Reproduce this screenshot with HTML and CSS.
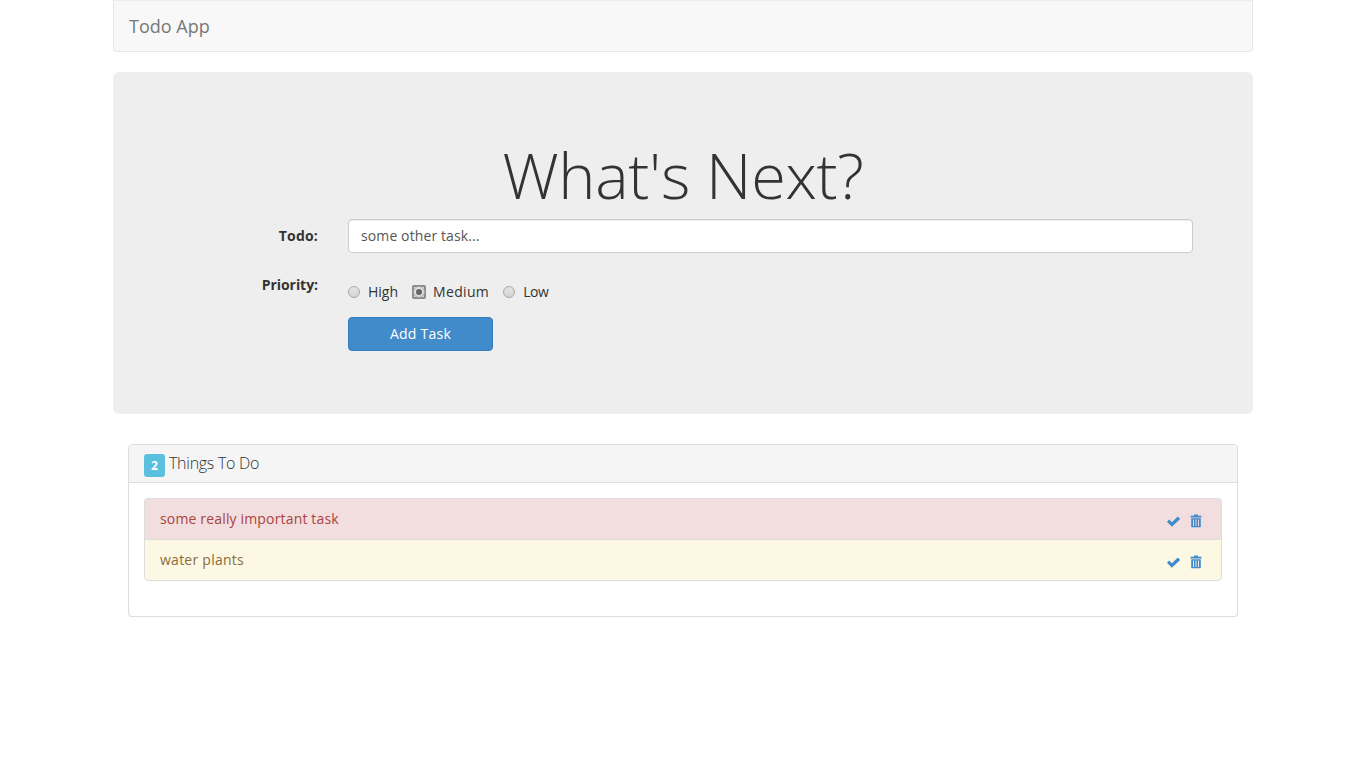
FILE: index.html
```html
<!DOCTYPE html>
<html lang="en">
<head>
<meta charset="utf-8">
<title>Todo App</title>
<link rel="stylesheet" href="styles.css">
</head>
<body>
<div class="container">
  <nav class="navbar"><a class="brand" href="#">Todo App</a></nav>
  <section class="jumbotron">
    <h1>What's Next?</h1>
    <form class="task-form">
      <div class="form-group">
        <label class="field-label todo-label" for="todo">Todo:</label>
        <div class="field"><input id="todo" class="text-input" type="text" value="some other task..."></div>
      </div>
      <div class="form-group">
        <span class="field-label">Priority:</span>
        <div class="field radios">
          <label class="radio"><input type="radio" name="priority"><span>High</span></label>
          <label class="radio"><input class="focused" type="radio" name="priority" checked><span class="medium">Medium</span></label>
          <label class="radio"><input type="radio" name="priority"><span class="low">Low</span></label>
        </div>
      </div>
      <div class="form-group">
        <span class="field-label"></span>
        <div class="field"><button class="btn" type="button">Add Task</button></div>
      </div>
    </form>
  </section>
  <section class="panel">
    <header class="panel-heading"><span class="count">2</span><span class="panel-title">Things To Do</span></header>
    <div class="panel-body">
      <ul class="list">
        <li class="item danger"><span>some really important task</span>
          <span class="actions">
            <svg class="icon" viewBox="0 0 14 14"><path d="M0 7.8 2.2 5.6 4.9 8.2 10.8 2.6 13.2 4.9 4.9 12.8Z"/></svg>
            <svg class="icon trash" viewBox="0 0 12 14"><path fill-rule="evenodd" d="M4.2 0.6H7.8L8.4 1.8H11.5V3.6H0.5V1.8H3.6ZM1.2 4.3H10.8V12.4Q10.8 13.3 9.9 13.3H2.1Q1.2 13.3 1.2 12.4ZM3.1 5.6V12H4V5.6ZM5.55 5.6V12H6.45V5.6ZM8 5.6V12H8.9V5.6Z"/></svg>
          </span>
        </li>
        <li class="item warning"><span>water plants</span>
          <span class="actions">
            <svg class="icon" viewBox="0 0 14 14"><path d="M0 7.8 2.2 5.6 4.9 8.2 10.8 2.6 13.2 4.9 4.9 12.8Z"/></svg>
            <svg class="icon trash" viewBox="0 0 12 14"><path fill-rule="evenodd" d="M4.2 0.6H7.8L8.4 1.8H11.5V3.6H0.5V1.8H3.6ZM1.2 4.3H10.8V12.4Q10.8 13.3 9.9 13.3H2.1Q1.2 13.3 1.2 12.4ZM3.1 5.6V12H4V5.6ZM5.55 5.6V12H6.45V5.6ZM8 5.6V12H8.9V5.6Z"/></svg>
          </span>
        </li>
      </ul>
    </div>
  </section>
</div>
</body>
</html>
```
FILE: styles.css
```css
*, *::before, *::after { box-sizing: border-box; }
html, body { margin: 0; padding: 0; }
body {
  font-family: "Open Sans", sans-serif;
  font-size: 14px;
  line-height: 20px;
  color: #333;
  background: #fff;
}
.container { width: 1140px; margin: 0 auto; }
.navbar {
  height: 52px;
  margin-bottom: 20px;
  padding: 0 15px;
  display: flex;
  align-items: center;
  background: #f8f8f8;
  border: 1px solid #e7e7e7;
  border-top-color: #eee;
  border-radius: 0 0 4px 4px;
}
.brand { font-size: 18px; color: #777; text-decoration: none; }
.jumbotron {
  padding: 48px 60px;
  margin-bottom: 30px;
  background: #eee;
  border-radius: 6px;
}
h1 {
  margin: 20px 0 10px;
  font-size: 63px;
  font-weight: 300;
  line-height: 1.1;
  letter-spacing: -0.29px;
  text-align: center;
  color: #333;
}
.form-group { display: flex; margin-bottom: 15px; }
.field-label {
  flex: 0 0 145px;
  margin-right: 30px;
  padding-top: 7px;
  font-weight: 700;
  letter-spacing: -0.05px;
  text-align: right;
}
.todo-label { letter-spacing: 0.2px; }
.field { flex: 1; }
.text-input {
  display: block;
  width: 100%;
  height: 34px;
  padding: 5px 12px 7px;
  font: inherit;
  letter-spacing: 0.11px;
  color: #555;
  background: #fff;
  border: 1px solid #ccc;
  border-radius: 4px;
  box-shadow: inset 0 1px 1px rgba(0,0,0,.075);
}
.radios { display: flex; gap: 14px; padding-top: 14px; }
.radio { display: flex; align-items: center; height: 20px; isolation: isolate; }
.radio input {
  appearance: none;
  width: 12px;
  height: 12px;
  margin: 0 8px 0 0;
  border: 1px solid #a9a9a9;
  border-radius: 50%;
  background: linear-gradient(#e4e4e4, #d4d4d4);
  position: relative;
}
.radio input:checked::after {
  content: "";
  position: absolute;
  left: 2px;
  top: 2px;
  width: 6px;
  height: 6px;
  border-radius: 50%;
  background: #666;
}
.radio input.focused { margin-left: 1px; }
.radio input.focused::before {
  content: "";
  position: absolute;
  z-index: -1;
  left: -2px;
  top: -2px;
  width: 14px;
  height: 14px;
  background: #e2e2e2;
  border: 2px solid #8a8a8a;
  border-radius: 2px;
}
.medium { letter-spacing: 0.33px; }
.low { letter-spacing: -0.4px; }
.btn {
  display: block;
  width: 145px;
  height: 34px;
  padding: 0;
  font: inherit;
  letter-spacing: 0.25px;
  color: #fff;
  background: #428bca;
  border: 1px solid #357ebd;
  border-radius: 4px;
}
.panel {
  margin: 0 15px;
  height: 173px;
  background: #fff;
  border: 1px solid #ddd;
  border-radius: 4px;
  box-shadow: 0 1px 1px rgba(0,0,0,.05);
}
.panel-heading {
  display: flex;
  align-items: center;
  height: 38px;
  padding: 0 15px;
  background: #f5f5f5;
  border-bottom: 1px solid #ddd;
  border-radius: 3px 3px 0 0;
}
.count {
  width: 21px;
  height: 23px;
  margin: 4px 4px 0 0;
  text-align: center;
  font-size: 12px;
  font-weight: 700;
  line-height: 23px;
  color: #fff;
  background: #5bc0de;
  border-radius: 3px;
}
.panel-title { font-size: 16px; font-weight: 300; letter-spacing: -0.27px; color: #333; padding-bottom: 2px; }
.panel-body { padding: 15px; }
.list { list-style: none; margin: 0; padding: 0; }
.item {
  display: flex;
  justify-content: space-between;
  align-items: center;
  height: 42px;
  padding: 0 15px;
  border: 1px solid #ddd;
  letter-spacing: 0.16px;
}
.item + .item { margin-top: -1px; }
.danger { color: #a94442; background: #f2dede; border-radius: 4px 4px 0 0; }
.warning { color: #8a6d3b; background: #fcf8e3; border-radius: 0 0 4px 4px; letter-spacing: 0.25px; }
.actions { display: flex; gap: 9px; padding-top: 4px; margin-right: 4px; }
.icon { width: 14px; height: 14px; fill: #428bca; display: block; }
.trash { width: 12px; }
```
